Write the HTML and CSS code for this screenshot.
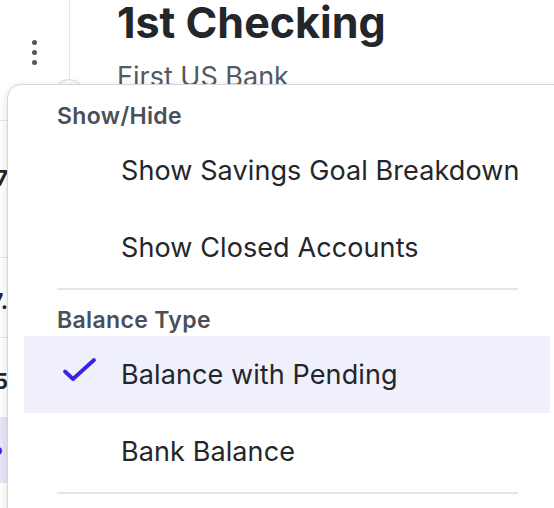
FILE: index.html
```html
<!DOCTYPE html>
<html lang="en">
<head>
<meta charset="utf-8">
<title>Account menu</title>
<link rel="stylesheet" href="styles.css">
</head>
<body>
<div class="page">
  <aside class="rail">
    <button class="kebab" aria-label="More options">
      <span class="dot"></span><span class="dot"></span><span class="dot"></span>
    </button>
    <span class="rail-toggle"></span>
  </aside>
  <main class="main">
    <h1 class="title">1st Checking</h1>
    <p class="subtitle">First US Bank</p>
  </main>

  <div class="accounts">
    <div class="acct-row acct-first"><span class="amt">$1,207</span></div>
    <div class="acct-row"><span class="amt">$2,847.</span></div>
    <div class="acct-row"><span class="amt">$365</span></div>
    <div class="acct-row acct-active"><span class="pip"></span></div>
  </div>

  <div class="menu" role="menu">
    <div class="menu-header">Show/Hide</div>
    <div class="menu-item" role="menuitem"><span class="check"></span><span class="label">Show Savings Goal Breakdown</span></div>
    <div class="menu-item" role="menuitem"><span class="check"></span><span class="label">Show Closed Accounts</span></div>
    <hr class="menu-divider">
    <div class="menu-header">Balance Type</div>
    <div class="menu-item selected" role="menuitemradio" aria-checked="true">
      <span class="check">
        <svg width="36" height="28" viewBox="0 0 36 28" aria-hidden="true"><path d="M3 14.5 L11 22 L32 3" fill="none" stroke="#3d22e6" stroke-width="3.8" stroke-linecap="round" stroke-linejoin="round"/></svg>
      </span>
      <span class="label">Balance with Pending</span>
    </div>
    <div class="menu-item" role="menuitemradio" aria-checked="false"><span class="check"></span><span class="label">Bank Balance</span></div>
    <hr class="menu-divider">
  </div>
</div>
</body>
</html>
```

FILE: styles.css
```css
html, body {
  margin: 0;
  padding: 0;
  background: #ffffff;
  overflow: hidden;
}

body {
  font-family: Inter, "Noto Sans", "Liberation Sans", sans-serif;
  color: #23262b;
  width: 554px;
  height: 508px;
}

.page {
  position: relative;
  width: 554px;
  height: 508px;
  display: grid;
  grid-template-columns: 70px 1fr;
  grid-template-rows: 110px 1fr;
}

.rail {
  position: relative;
  grid-row: 1 / 3;
  border-right: 1px solid #e6e7e9;
  display: flex;
  justify-content: center;
  padding-top: 40px;
  box-sizing: border-box;
}

.kebab {
  border: 0;
  background: transparent;
  padding: 0;
  width: 12px;
  height: 25px;
  display: flex;
  flex-direction: column;
  align-items: center;
  justify-content: space-between;
}

.dot {
  width: 5px;
  height: 5px;
  border-radius: 50%;
  background: #50565e;
}

.rail-toggle {
  position: absolute;
  right: -16px;
  top: 79px;
  width: 30px;
  height: 30px;
  border-radius: 50%;
  border: 1px solid #d8dadd;
  background: #fafafa;
}

.main {
  padding-left: 47px;
}

.title {
  margin: 0;
  font-size: 43px;
  line-height: 44px;
  font-weight: 700;
  color: #23262b;
}

.subtitle {
  margin: 18px 0 0;
  font-size: 27px;
  line-height: 30px;
  color: #535a62;
}

.accounts {
  position: absolute;
  left: -80px;
  top: 120px;
  width: 88px;
  display: flex;
  flex-direction: column;
}

.acct-row {
  border-top: 1px solid #e3e4e6;
  height: 137px;
  display: flex;
  justify-content: flex-end;
  padding-top: 44px;
  box-sizing: border-box;
  font-size: 22px;
  font-weight: 700;
  color: #23262b;
}

.acct-row + .acct-row {
  height: 80px;
  padding-top: 30px;
}

.acct-row.acct-active {
  background: #e6e6f6;
  height: 66px;
  align-items: center;
  padding-top: 0;
}

.pip {
  width: 8px;
  height: 8px;
  border-radius: 50%;
  background: #3d22e6;
  margin-right: 6px;
}

.menu {
  position: absolute;
  left: 7px;
  top: 84px;
  width: 560px;
  height: 460px;
  background: #ffffff;
  border: 1px solid #d3d5d8;
  border-radius: 14px;
  box-shadow: 0 2px 10px rgba(0, 0, 0, 0.12);
  box-sizing: border-box;
  padding: 15px 16px 0;
  display: flex;
  flex-direction: column;
}

.menu-header {
  height: 32px;
  line-height: 32px;
  padding-left: 33px;
  font-size: 23px;
  font-weight: 600;
  letter-spacing: 0.35px;
  color: #4a5058;
}

.menu-item {
  height: 77px;
  display: flex;
  align-items: center;
  font-size: 27px;
  letter-spacing: 0.1px;
  color: #23262b;
}

.menu-item.selected {
  background: #f0effc;
}

.check {
  width: 97px;
  flex: none;
  display: flex;
  align-items: center;
  padding-left: 38px;
  box-sizing: border-box;
}

.check svg {
  display: block;
  margin-top: -7px;
}

.label {
  white-space: nowrap;
}

.menu-divider {
  margin: 2px 32px 14px 33px;
  border: 0;
  height: 2px;
  background: #e4e5e7;
}
```
